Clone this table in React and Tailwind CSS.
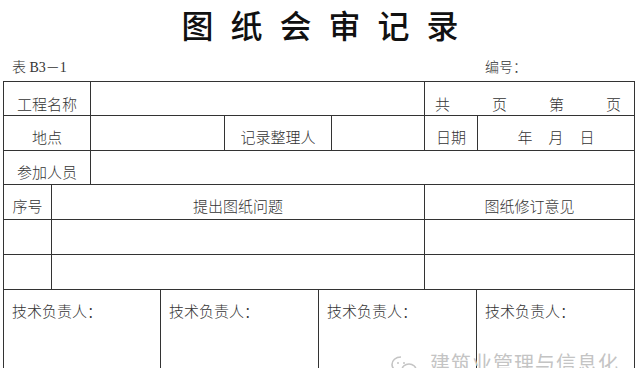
export default function App() {
  const cell = "border-r border-b border-[#333] flex items-center justify-center";
  return (
    <div className="relative w-[640px] h-[368px] overflow-hidden bg-white text-[#333] font-light font-['Liberation_Serif','Noto_Sans_CJK_SC',serif]">
      <div className="h-[46px] flex items-center justify-center gap-[17px] text-[32px] leading-[36px] font-medium text-[#111] font-['Noto_Sans_CJK_SC',sans-serif] pt-[2px]">
        <span>图</span><span>纸</span><span>会</span><span>审</span><span>记</span><span>录</span>
      </div>
      <div className="h-[35px] flex pt-[13px] text-[14px] leading-[17px]">
        <span className="pl-[12px] w-[485px]">表 B3－1</span>
        <span>编号：</span>
      </div>
      <div className="ml-[3px] w-[632px] border-l border-t border-[#333] text-[15px] leading-[16px]">
        <div className="flex h-[34px]">
          <div className={`${cell} w-[87px] pt-[12px]`}>工程名称</div>
          <div className={`${cell} w-[334px]`}></div>
          <div className="border-r border-b border-[#333] flex-1 flex items-center justify-between pl-[10px] pr-[13px] pt-[12px]">
            <span>共</span><span>页</span><span>第</span><span>页</span>
          </div>
        </div>
        <div className="flex h-[35px]">
          <div className={`${cell} w-[87px] pt-[10px]`}>地点</div>
          <div className={`${cell} w-[134px]`}></div>
          <div className={`${cell} w-[107px] pt-[10px]`}>记录整理人</div>
          <div className={`${cell} w-[93px]`}></div>
          <div className={`${cell} w-[53px] pt-[10px]`}>日期</div>
          <div className={`${cell} flex-1 gap-4 pt-[10px]`}>
            <span>年</span><span>月</span><span>日</span>
          </div>
        </div>
        <div className="flex h-[34px]">
          <div className={`${cell} w-[87px] pt-[10px]`}>参加人员</div>
          <div className={`${cell} flex-1`}></div>
        </div>
        <div className="flex h-[35px]">
          <div className={`${cell} w-[48px] pt-[10px]`}>序号</div>
          <div className={`${cell} w-[373px] pt-[10px]`}>提出图纸问题</div>
          <div className={`${cell} flex-1 pt-[10px]`}>图纸修订意见</div>
        </div>
        <div className="flex h-[35px]">
          <div className={`${cell} w-[48px]`}></div>
          <div className={`${cell} w-[373px]`}></div>
          <div className={`${cell} flex-1`}></div>
        </div>
        <div className="flex h-[35px]">
          <div className={`${cell} w-[48px]`}></div>
          <div className={`${cell} w-[373px]`}></div>
          <div className={`${cell} flex-1`}></div>
        </div>
        <div className="flex h-[90px]">
          <div className="border-r border-b border-[#333] w-[157px] pt-[14px] pl-[8px]">技术负责人：</div>
          <div className="border-r border-b border-[#333] w-[158px] pt-[14px] pl-[8px]">技术负责人：</div>
          <div className="border-r border-b border-[#333] w-[158px] pt-[14px] pl-[8px]">技术负责人：</div>
          <div className="border-r border-b border-[#333] flex-1 pt-[14px] pl-[8px]">技术负责人：</div>
        </div>
      </div>
      <div className="absolute left-[390px] top-[352px] flex items-start gap-[12px] text-[#c4c4c4] text-[20px] leading-[22px] tracking-[1px] font-normal font-['Noto_Sans_CJK_SC',sans-serif]">
        <svg width="28" height="24" viewBox="0 0 28 24" fill="none" stroke="#c4c4c4" strokeWidth="1.6" className="mt-[2px]">
          <path d="M11 3C5.5 3 2 6.5 2 10.5c0 2.3 1.2 4.2 3.2 5.6L4.5 19l3.3-1.7c1 .3 2 .4 3.2.4" />
          <circle cx="8" cy="9" r="1" fill="#c4c4c4" stroke="none" />
          <circle cx="14" cy="9" r="1" fill="#c4c4c4" stroke="none" />
          <path d="M19 10c4 0 7 2.7 7 6s-3 6-7 6c-.8 0-1.6-.1-2.3-.3L14 23l.7-2.4C13 19.4 12 17.8 12 16c0-3.3 3-6 7-6z" />
        </svg>
        <span>建筑业管理与信息化</span>
      </div>
    </div>
  );
}
